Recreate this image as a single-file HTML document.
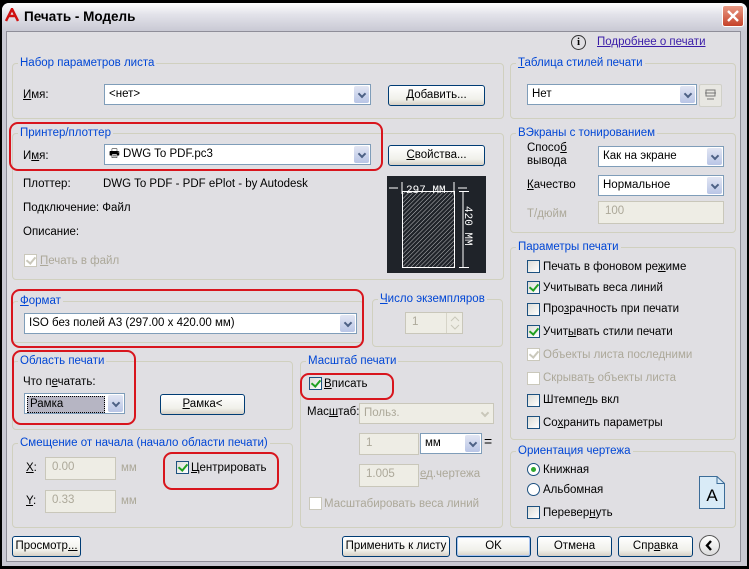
<!DOCTYPE html><html><head><meta charset="utf-8"><style>
*{box-sizing:border-box}
body{margin:0;width:749px;height:569px;background:#000;position:relative;overflow:hidden;font-family:"Liberation Sans",sans-serif;font-size:11.5px;color:#000}
.a{position:absolute}
.win{left:2px;top:3px;width:745px;height:563px;background:#c9c8d2;border-radius:7px 7px 0 0}
.title{left:2px;top:3px;width:745px;height:28px;border-radius:7px 7px 0 0;background:linear-gradient(#fdfdfe,#e3e3ea 40%,#c9c9d4)}
.client{left:6px;top:31px;width:735px;height:531px;background:#e0dfe3;border:1px solid #8f8e99}
.g{position:absolute;border:1px solid #d0d0bf;border-radius:4px}
.gl{position:absolute;background:#e0dfe3;color:#0046d5;padding:0 2px;white-space:nowrap;line-height:13px}
.t{position:absolute;white-space:nowrap;line-height:13px}
.dis{color:#aca899}
.cb{position:absolute;background:#fff;border:1px solid #7f9db9;height:21px;padding:3px 4px;white-space:nowrap;line-height:13px}
.cb:after{content:"";position:absolute;right:1px;top:1px;width:15px;height:17px;background:linear-gradient(#e2e6f3,#b9c5e6);border-radius:2px}
.cb:before{content:"";position:absolute;right:5px;top:6px;width:4px;height:4px;border-right:2px solid #4d6185;border-bottom:2px solid #4d6185;transform:rotate(45deg);z-index:1}
.cbd{background:#eeede5;color:#aca899;border-color:#c9c7ba}
.cbd:after{background:#eeede5}
.cbd:before{border-color:#c9c7ba}
.in{position:absolute;border:1px solid #c9c7ba;background:#eeede5;color:#aca899;padding:3px 6px;line-height:13px}
.btn{position:absolute;border:1px solid #003c74;border-radius:3px;background:linear-gradient(#fff,#f0f0ea 70%,#d6d0c5);text-align:center;line-height:19px;height:21px}
.ck{position:absolute;width:13px;height:13px;border:1px solid #1c5180;background:linear-gradient(135deg,#dcdcd7,#fff)}
.ck.on:after{content:"";position:absolute;left:3px;top:0px;width:4px;height:7px;border-right:2px solid #21a121;border-bottom:2px solid #21a121;transform:rotate(40deg)}
.ck.d{border-color:#cac8bb;background:#fff}
.ck.d.on:after{border-color:#cac8bb}
.red{position:absolute;border:2px solid #d8151d;border-radius:9px}
u{text-decoration:underline}
</style></head><body>
<div class="a win"></div>
<div class="a title"></div>
<div class="a" style="left:5px;top:8px;width:14px;height:14px"><svg width="14" height="14"><path d="M1 13 L7 1 L13 13 M4 8 H10" stroke="#d01010" stroke-width="2.5" fill="none"/></svg></div>
<div class="t" style="left:24px;top:10px;font-weight:bold;font-size:13.5px">Печать - Модель</div>
<div class="a" style="left:722px;top:5px;width:22px;height:22px;border:1px solid #fff;border-radius:3px;background:linear-gradient(#e99a85,#c5422a)"><svg width="20" height="20"><path d="M5 5L15 15M15 5L5 15" stroke="#fff" stroke-width="2.4"/></svg></div>
<div class="a client"></div>

<div class="a" style="left:571px;top:35px;width:15px;height:15px;border:1px solid #333;border-radius:50%;text-align:center;font-weight:bold;font-size:11px;line-height:13px;font-family:'Liberation Serif',serif">i</div>
<div class="t" style="left:597px;top:36px;color:#3a1ca8;text-decoration:underline">Подробнее о печати</div>

<div class="g" style="left:12px;top:63px;width:492px;height:56px"></div>
<div class="gl" style="left:18px;top:57px">Набор параметров листа</div>
<div class="t" style="left:23px;top:89px"><u>И</u>мя:</div>
<div class="cb" style="left:104px;top:84px;width:267px">&lt;нет&gt;</div>
<div class="btn" style="left:388px;top:85px;width:97px"><u>Д</u>обавить...</div>

<div class="g" style="left:12px;top:133px;width:492px;height:147px"></div>
<div class="gl" style="left:18px;top:127px">Принтер/плоттер</div>
<div class="t" style="left:23px;top:150px">И<u>м</u>я:</div>
<div class="cb" style="left:104px;top:144px;width:267px">&#x1F5B6;&#xFE0E; DWG To PDF.pc3</div>
<div class="btn" style="left:388px;top:145px;width:97px"><u>С</u>войства...</div>
<div class="red" style="left:9px;top:122px;width:374px;height:49px"></div>
<div class="t" style="left:23px;top:178px">Плоттер:</div>
<div class="t" style="left:103px;top:178px">DWG To PDF - PDF ePlot - by Autodesk</div>
<div class="t" style="left:23px;top:202px">Подключение: Файл</div>
<div class="t" style="left:23px;top:226px">Описание:</div>
<div class="ck d on" style="left:24px;top:254px"></div>
<div class="t dis" style="left:40px;top:255px"><u>П</u>ечать в файл</div>
<div class="a" style="left:387px;top:176px;width:99px;height:97px;background:#1f2329">
<svg width="99" height="97" style="font-family:'Liberation Mono',monospace">
<defs><pattern id="h" width="3" height="3" patternUnits="userSpaceOnUse" patternTransform="rotate(45)"><line x1="0" y1="0" x2="0" y2="3" stroke="#fff" stroke-width="0.7"/></pattern></defs>
<rect x="15.5" y="15.5" width="52" height="76" fill="url(#h)" stroke="#fff"/>
<path d="M2 12H11M15 6V18M67 6V18M71 12H80M72 15.5H82M76 15.5V91M72 91.5H82" stroke="#fff" fill="none"/>
<text x="19" y="17" fill="#fff" font-size="11">297 MM</text>
<text x="78" y="30" fill="#fff" font-size="11" transform="rotate(90 78 30)">420 MM</text>
</svg></div>

<div class="g" style="left:12px;top:301px;width:352px;height:42px"></div>
<div class="gl" style="left:18px;top:295px"><u>Ф</u>ормат</div>
<div class="cb" style="left:24px;top:313px;width:333px">ISO без полей A3 (297.00 x 420.00 мм)</div>
<div class="red" style="left:11px;top:289px;width:353px;height:59px"></div>
<div class="g" style="left:372px;top:299px;width:131px;height:48px"></div>
<div class="gl" style="left:378px;top:293px"><u>Ч</u>исло экземпляров</div>
<div class="in" style="left:405px;top:312px;width:58px;height:22px">1</div>
<div class="a" style="left:446px;top:313px;width:16px;height:20px;border-left:1px solid #d6d4c8"><svg width="16" height="20"><path d="M4 8L8 4L12 8M4 12L8 16L12 12" stroke="#c9c7ba" fill="none"/></svg></div>

<div class="g" style="left:12px;top:361px;width:281px;height:69px"></div>
<div class="gl" style="left:18px;top:355px">Область печати</div>
<div class="t" style="left:23px;top:376px">Что п<u>е</u>чатать:</div>
<div class="cb" style="left:24px;top:393px;width:101px;padding:2px"><span style="display:block;background:#b6b5c3;border:1px dotted #000;width:78px;padding:1px 2px">Рамка</span></div>
<div class="btn" style="left:160px;top:394px;width:85px"><u>Р</u>амка&lt;</div>
<div class="red" style="left:12px;top:350px;width:124px;height:75px"></div>

<div class="g" style="left:12px;top:443px;width:281px;height:85px"></div>
<div class="gl" style="left:18px;top:437px">Смещение от начала (начало области печати)</div>
<div class="t" style="left:26px;top:462px"><u>X</u>:</div>
<div class="in" style="left:45px;top:457px;width:71px;height:23px">0.00</div>
<div class="t dis" style="left:121px;top:462px">мм</div>
<div class="t" style="left:26px;top:495px"><u>Y</u>:</div>
<div class="in" style="left:45px;top:490px;width:71px;height:23px">0.33</div>
<div class="t dis" style="left:121px;top:495px">мм</div>
<div class="ck on" style="left:176px;top:461px"></div>
<div class="t" style="left:191px;top:462px"><u>Ц</u>ентрировать</div>
<div class="red" style="left:163px;top:452px;width:116px;height:38px"></div>

<div class="g" style="left:300px;top:361px;width:203px;height:167px"></div>
<div class="gl" style="left:306px;top:355px">Масштаб печати</div>
<div class="ck on" style="left:309px;top:377px"></div>
<div class="t" style="left:324px;top:378px"><u>В</u>писать</div>
<div class="red" style="left:300px;top:373px;width:94px;height:27px"></div>
<div class="t" style="left:307px;top:406px">Мас<u>ш</u>таб:</div>
<div class="cb cbd" style="left:359px;top:403px;width:135px">Польз.</div>
<div class="in" style="left:359px;top:433px;width:60px;height:22px">1</div>
<div class="cb" style="left:420px;top:433px;width:62px">мм</div>
<div class="t" style="left:484px;top:435px;font-size:14px">=</div>
<div class="in" style="left:359px;top:464px;width:60px;height:23px">1.005</div>
<div class="t dis" style="left:420px;top:468px"><u>е</u>д.чертежа</div>
<div class="ck d" style="left:309px;top:497px"></div>
<div class="t dis" style="left:324px;top:498px">Масштабировать веса линий</div>

<div class="g" style="left:510px;top:63px;width:226px;height:56px"></div>
<div class="gl" style="left:516px;top:57px"><u>Т</u>аблица стилей печати</div>
<div class="cb" style="left:527px;top:84px;width:170px">Нет</div>
<div class="a" style="left:699px;top:84px;width:23px;height:23px;border:1px solid #d0d0c8;border-radius:2px;background:#e8e7e2"><svg width="21" height="21"><path d="M6 5H15V11H6ZM5 8H16M7 14H14" stroke="#777" fill="none"/></svg></div>

<div class="g" style="left:510px;top:133px;width:226px;height:100px"></div>
<div class="gl" style="left:516px;top:127px">ВЭкраны с тонированием</div>
<div class="t" style="left:527px;top:142px">Спосо<u>б</u><br>вывода</div>
<div class="cb" style="left:598px;top:146px;width:126px">Как на экране</div>
<div class="t" style="left:527px;top:179px"><u>К</u>ачество</div>
<div class="cb" style="left:598px;top:175px;width:126px">Нормальное</div>
<div class="t dis" style="left:527px;top:208px">Т/дюйм</div>
<div class="in" style="left:598px;top:201px;width:126px;height:23px">100</div>

<div class="g" style="left:510px;top:247px;width:226px;height:193px"></div>
<div class="gl" style="left:516px;top:241px">Параметры печати</div>
<div class="ck" style="left:527px;top:260px"></div><div class="t" style="left:543px;top:261px">Печать в фоновом ре<u>ж</u>име</div>
<div class="ck on" style="left:527px;top:281px"></div><div class="t" style="left:543px;top:282px">Учитывать веса линий</div>
<div class="ck" style="left:527px;top:303px"></div><div class="t" style="left:543px;top:303px">Про<u>з</u>рачность при печати</div>
<div class="ck on" style="left:527px;top:325px"></div><div class="t" style="left:543px;top:326px">Учит<u>ы</u>вать стили печати</div>
<div class="ck d on" style="left:527px;top:348px"></div><div class="t dis" style="left:543px;top:349px">Объекты листа последними</div>
<div class="ck d" style="left:527px;top:372px"></div><div class="t dis" style="left:543px;top:372px">Скрыват<u>ь</u> объекты листа</div>
<div class="ck" style="left:527px;top:394px"></div><div class="t" style="left:543px;top:394px">Штемпе<u>л</u>ь вкл</div>
<div class="ck" style="left:527px;top:416px"></div><div class="t" style="left:543px;top:417px">Со<u>х</u>ранить параметры</div>

<div class="g" style="left:510px;top:451px;width:226px;height:77px"></div>
<div class="gl" style="left:516px;top:445px">Ориентация чертежа</div>
<div class="a" style="left:527px;top:463px;width:13px;height:13px;border:1px solid #1c5180;border-radius:50%;background:#fff"><div class="a" style="left:3px;top:3px;width:5px;height:5px;border-radius:50%;background:#2fa82f"></div></div>
<div class="t" style="left:543px;top:464px">Книжная</div>
<div class="a" style="left:527px;top:483px;width:13px;height:13px;border:1px solid #1c5180;border-radius:50%;background:#fff"></div>
<div class="t" style="left:543px;top:484px">Альбомная</div>
<div class="ck" style="left:527px;top:506px"></div><div class="t" style="left:543px;top:507px">Перевер<u>н</u>уть</div>
<div class="a" style="left:699px;top:476px;width:26px;height:33px"><svg width="26" height="33"><path d="M0.5 0.5H18L25.5 7.5V32.5H0.5Z" fill="#d9ebf7" stroke="#3b6c98"/><path d="M18 0.5V7.5H25.5" fill="none" stroke="#3b6c98"/><text x="13" y="25" text-anchor="middle" font-family="Liberation Sans" font-size="17">A</text></svg></div>

<div class="btn" style="left:12px;top:536px;width:69px">Просмотр<u>...</u></div>
<div class="btn" style="left:342px;top:536px;width:108px">Применить к листу</div>
<div class="btn" style="left:456px;top:536px;width:75px;border-color:#003c74;box-shadow:inset 0 0 0 1px #a9c4f0">OK</div>
<div class="btn" style="left:537px;top:536px;width:75px">Отмена</div>
<div class="btn" style="left:618px;top:536px;width:75px">Спр<u>а</u>вка</div>
<div class="a" style="left:699px;top:535px;width:21px;height:21px;border:1px solid #555;border-radius:50%;background:linear-gradient(#fff,#dcdcdc)"><svg width="19" height="19"><path d="M11 5L7 9.5L11 14" stroke="#000" stroke-width="2.4" fill="none"/></svg></div>
</body></html>
